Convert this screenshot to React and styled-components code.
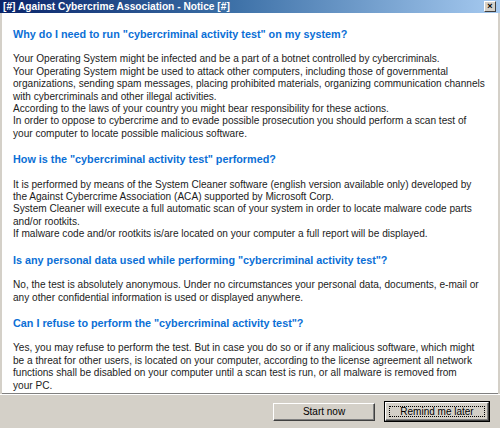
import styled, { createGlobalStyle } from 'styled-components';

const GlobalStyle = createGlobalStyle`
    html, body {
        margin: 0;
        padding: 0;
        background: #d4d0c8;
    }
`;

const Window = styled.div`
    width: 500px;
    height: 428px;
    display: flex;
    flex-direction: column;
    background: #d4d0c8;
    font-family: "Liberation Sans", Arial, sans-serif;
    overflow: hidden;
`;

const TitleBar = styled.div`
    height: 13px;
    flex: none;
    display: flex;
    align-items: center;
    justify-content: space-between;
    padding: 0 4px 0 3px;
    background: linear-gradient(to right, #0a246a 0%, #3a6ea5 45%, #a6caf0 100%);
`;

const Title = styled.span`
    color: #fff;
    font-weight: bold;
    font-size: 10.2px;
    line-height: 13px;
    white-space: nowrap;
`;

const CloseButton = styled.span`
    width: 10px;
    height: 9px;
    display: flex;
    align-items: center;
    justify-content: center;
    background: #d4d0c8;
    border: 1px solid;
    border-color: #fff #404040 #404040 #fff;
    font-size: 9px;
    font-weight: bold;
    line-height: 9px;
    color: #000;
`;

const Content = styled.div`
    flex: 1;
    background: #fff;
    margin: 0 2px;
    padding: 15px 0 0 11px;
    border-bottom: 1px solid #808080;
    display: flex;
    flex-direction: column;
    gap: 13px;
`;

const Heading = styled.h2`
    margin: 0;
    color: #0b6fd6;
    font-size: 10.8px;
    font-weight: bold;
    line-height: 12.4px;
    white-space: nowrap;
`;

const Para = styled.p`
    margin: 0;
    color: #1c1c1c;
    font-size: 10.1px;
    line-height: 12.4px;
    white-space: nowrap;
`;

const Footer = styled.div`
    height: 33px;
    flex: none;
    display: flex;
    align-items: center;
    justify-content: flex-end;
    gap: 10px;
    padding: 0 11px 0 0;
    border-top: 1px solid #fff;
`;

const Button = styled.button`
    width: ${p => (p.$default ? '104px' : '102px')};
    height: ${p => (p.$default ? '19px' : '18px')};
    padding: 0;
    background: #d4d0c8;
    font-family: "Liberation Sans", Arial, sans-serif;
    font-size: 10px;
    color: #000;
    border: 1px solid;
    border-color: #fff #404040 #404040 #fff;
    box-shadow: ${p => (p.$default ? '0 0 0 1px #000, inset -1px -1px 0 #808080' : 'inset -1px -1px 0 #808080')};
    outline: ${p => (p.$default ? '1px dotted #000' : 'none')};
    outline-offset: -5px;
`;

const sections = [
    {
        q: 'Why do I need to run "cybercriminal activity test" on my system?',
        lines: [
            'Your Operating System might be infected and be a part of a botnet controlled by cybercriminals.',
            'Your Operating System might be used to attack other computers, including those of governmental',
            'organizations, sending spam messages, placing prohibited materials, organizing communication channels',
            'with cybercriminals and other illegal activities.',
            'According to the laws of your country you might bear responsibility for these actions.',
            'In order to oppose to cybercrime and to evade possible prosecution you should perform a scan test of',
            'your computer to locate possible malicious software.',
        ],
    },
    {
        q: 'How is the "cybercriminal activity test" performed?',
        lines: [
            'It is performed by means of the System Cleaner software (english version available only) developed by',
            'the Against Cybercrime Association (ACA) supported by Microsoft Corp.',
            'System Cleaner will execute a full automatic scan of your system in order to locate malware code parts',
            'and/or rootkits.',
            'If malware code and/or rootkits is/are located on your computer a full report will be displayed.',
        ],
    },
    {
        q: 'Is any personal data used while performing "cybercriminal activity test"?',
        lines: [
            'No, the test is absolutely anonymous. Under no circumstances your personal data, documents, e-mail or',
            'any other confidential information is used or displayed anywhere.',
        ],
    },
    {
        q: 'Can I refuse to perform the "cybercriminal activity test"?',
        lines: [
            'Yes, you may refuse to perform the test. But in case you do so or if any malicious software, which might',
            'be a threat for other users, is located on your computer, according to the license agreement all network',
            'functions shall be disabled on your computer until a scan test is run, or all malware is removed from',
            'your PC.',
        ],
    },
];

export default function App() {
    return (
        <Window>
            <GlobalStyle />
            <TitleBar>
                <Title>[#] Against Cybercrime Association - Notice [#]</Title>
                <CloseButton>×</CloseButton>
            </TitleBar>
            <Content>
                {sections.map(s => (
                    <>
                        <Heading key={s.q}>{s.q}</Heading>
                        <Para>
                            {s.lines.map((l, i) => (
                                <span key={i}>{l}<br /></span>
                            ))}
                        </Para>
                    </>
                ))}
            </Content>
            <Footer>
                <Button>Start now</Button>
                <Button $default>Remind me later</Button>
            </Footer>
        </Window>
    );
}
